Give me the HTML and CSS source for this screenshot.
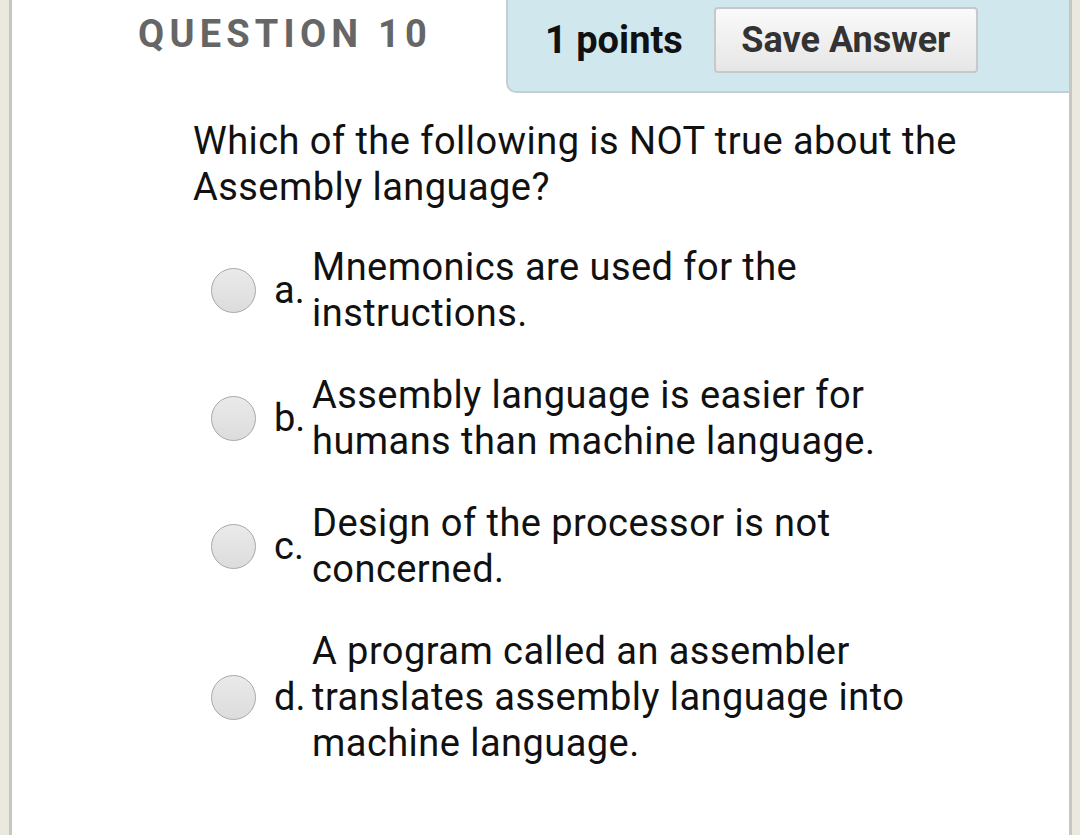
FILE: index.html
```html
<!DOCTYPE html>
<html>
<head>
<meta charset="utf-8">
<link rel="stylesheet" href="styles.css">
</head>
<body>
<div class="panel">
  <div class="header">
    <div class="qtitle">QUESTION 10</div>
    <div class="pointsbox">
      <span class="points">1 points</span>
      <button class="save">Save Answer</button>
    </div>
  </div>
  <div class="question">Which of the following is NOT true about the Assembly language?</div>
  <div class="options">
    <div class="option">
      <span class="radio"></span>
      <span class="letter">a.</span>
      <span class="text">Mnemonics are used for the instructions.</span>
    </div>
    <div class="option">
      <span class="radio"></span>
      <span class="letter">b.</span>
      <span class="text">Assembly language is easier for humans than machine language.</span>
    </div>
    <div class="option">
      <span class="radio"></span>
      <span class="letter">c.</span>
      <span class="text">Design of the processor is not concerned.</span>
    </div>
    <div class="option">
      <span class="radio"></span>
      <span class="letter">d.</span>
      <span class="text">A program called an assembler translates assembly language into machine language.</span>
    </div>
  </div>
</div>
</body>
</html>
```
FILE: styles.css
```css
html, body {
  margin: 0;
  padding: 0;
}
body {
  background: #ebe8df;
  font-family: Roboto, "Liberation Sans", sans-serif;
  height: 835px;
  overflow: hidden;
}
.panel {
  margin-left: 9px;
  width: 1057px;
  height: 835px;
  background: #ffffff;
  border-left: 3px solid #c7c7c2;
  border-right: 3px solid #c7c7c2;
}
.header {
  display: flex;
  align-items: flex-start;
  height: 95px;
}
.qtitle {
  padding-left: 126px;
  padding-top: 12px;
  font-size: 38px;
  font-weight: 700;
  letter-spacing: 5.2px;
  color: #666666;
  line-height: 44px;
}
.pointsbox {
  margin-left: auto;
  width: 524px;
  height: 91px;
  background: #d0e7ed;
  border-left: 2px solid #c3cfd2;
  border-bottom: 2px solid #c3cfd2;
  border-bottom-left-radius: 10px;
  display: flex;
  align-items: center;
  box-sizing: content-box;
  padding-left: 37px;
}
.points {
  font-size: 38px;
  font-weight: 700;
  color: #111111;
  margin-top: -12px;
}
.save {
  margin-left: 31px;
  margin-top: -12px;
  width: 264px;
  height: 66px;
  border: 2px solid #c8c8c8;
  border-radius: 4px;
  background: linear-gradient(#fafafa, #e6e6e6);
  font-family: Roboto, "Liberation Sans", sans-serif;
  font-size: 36px;
  font-weight: 700;
  color: #333333;
  padding: 0;
}
.question {
  margin-left: 181px;
  margin-top: 23px;
  width: 820px;
  font-size: 38px;
  letter-spacing: 0.45px;
  line-height: 46px;
  color: #111111;
}
.options {
  margin-top: 34px;
  display: flex;
  flex-direction: column;
  gap: 36px;
}
.option {
  display: flex;
  align-items: center;
  padding-left: 199px;
}
.radio {
  width: 43px;
  height: 43px;
  border-radius: 50%;
  border: 1px solid #a9a9a9;
  background: linear-gradient(#eaeaea, #dcdcdc);
  flex: none;
}
.letter {
  width: 38px;
  margin-left: 18px;
  font-size: 38px;
  color: #111111;
  line-height: 46px;
}
.text {
  width: 630px;
  font-size: 38px;
  letter-spacing: 0.45px;
  line-height: 46px;
  color: #111111;
}
```
